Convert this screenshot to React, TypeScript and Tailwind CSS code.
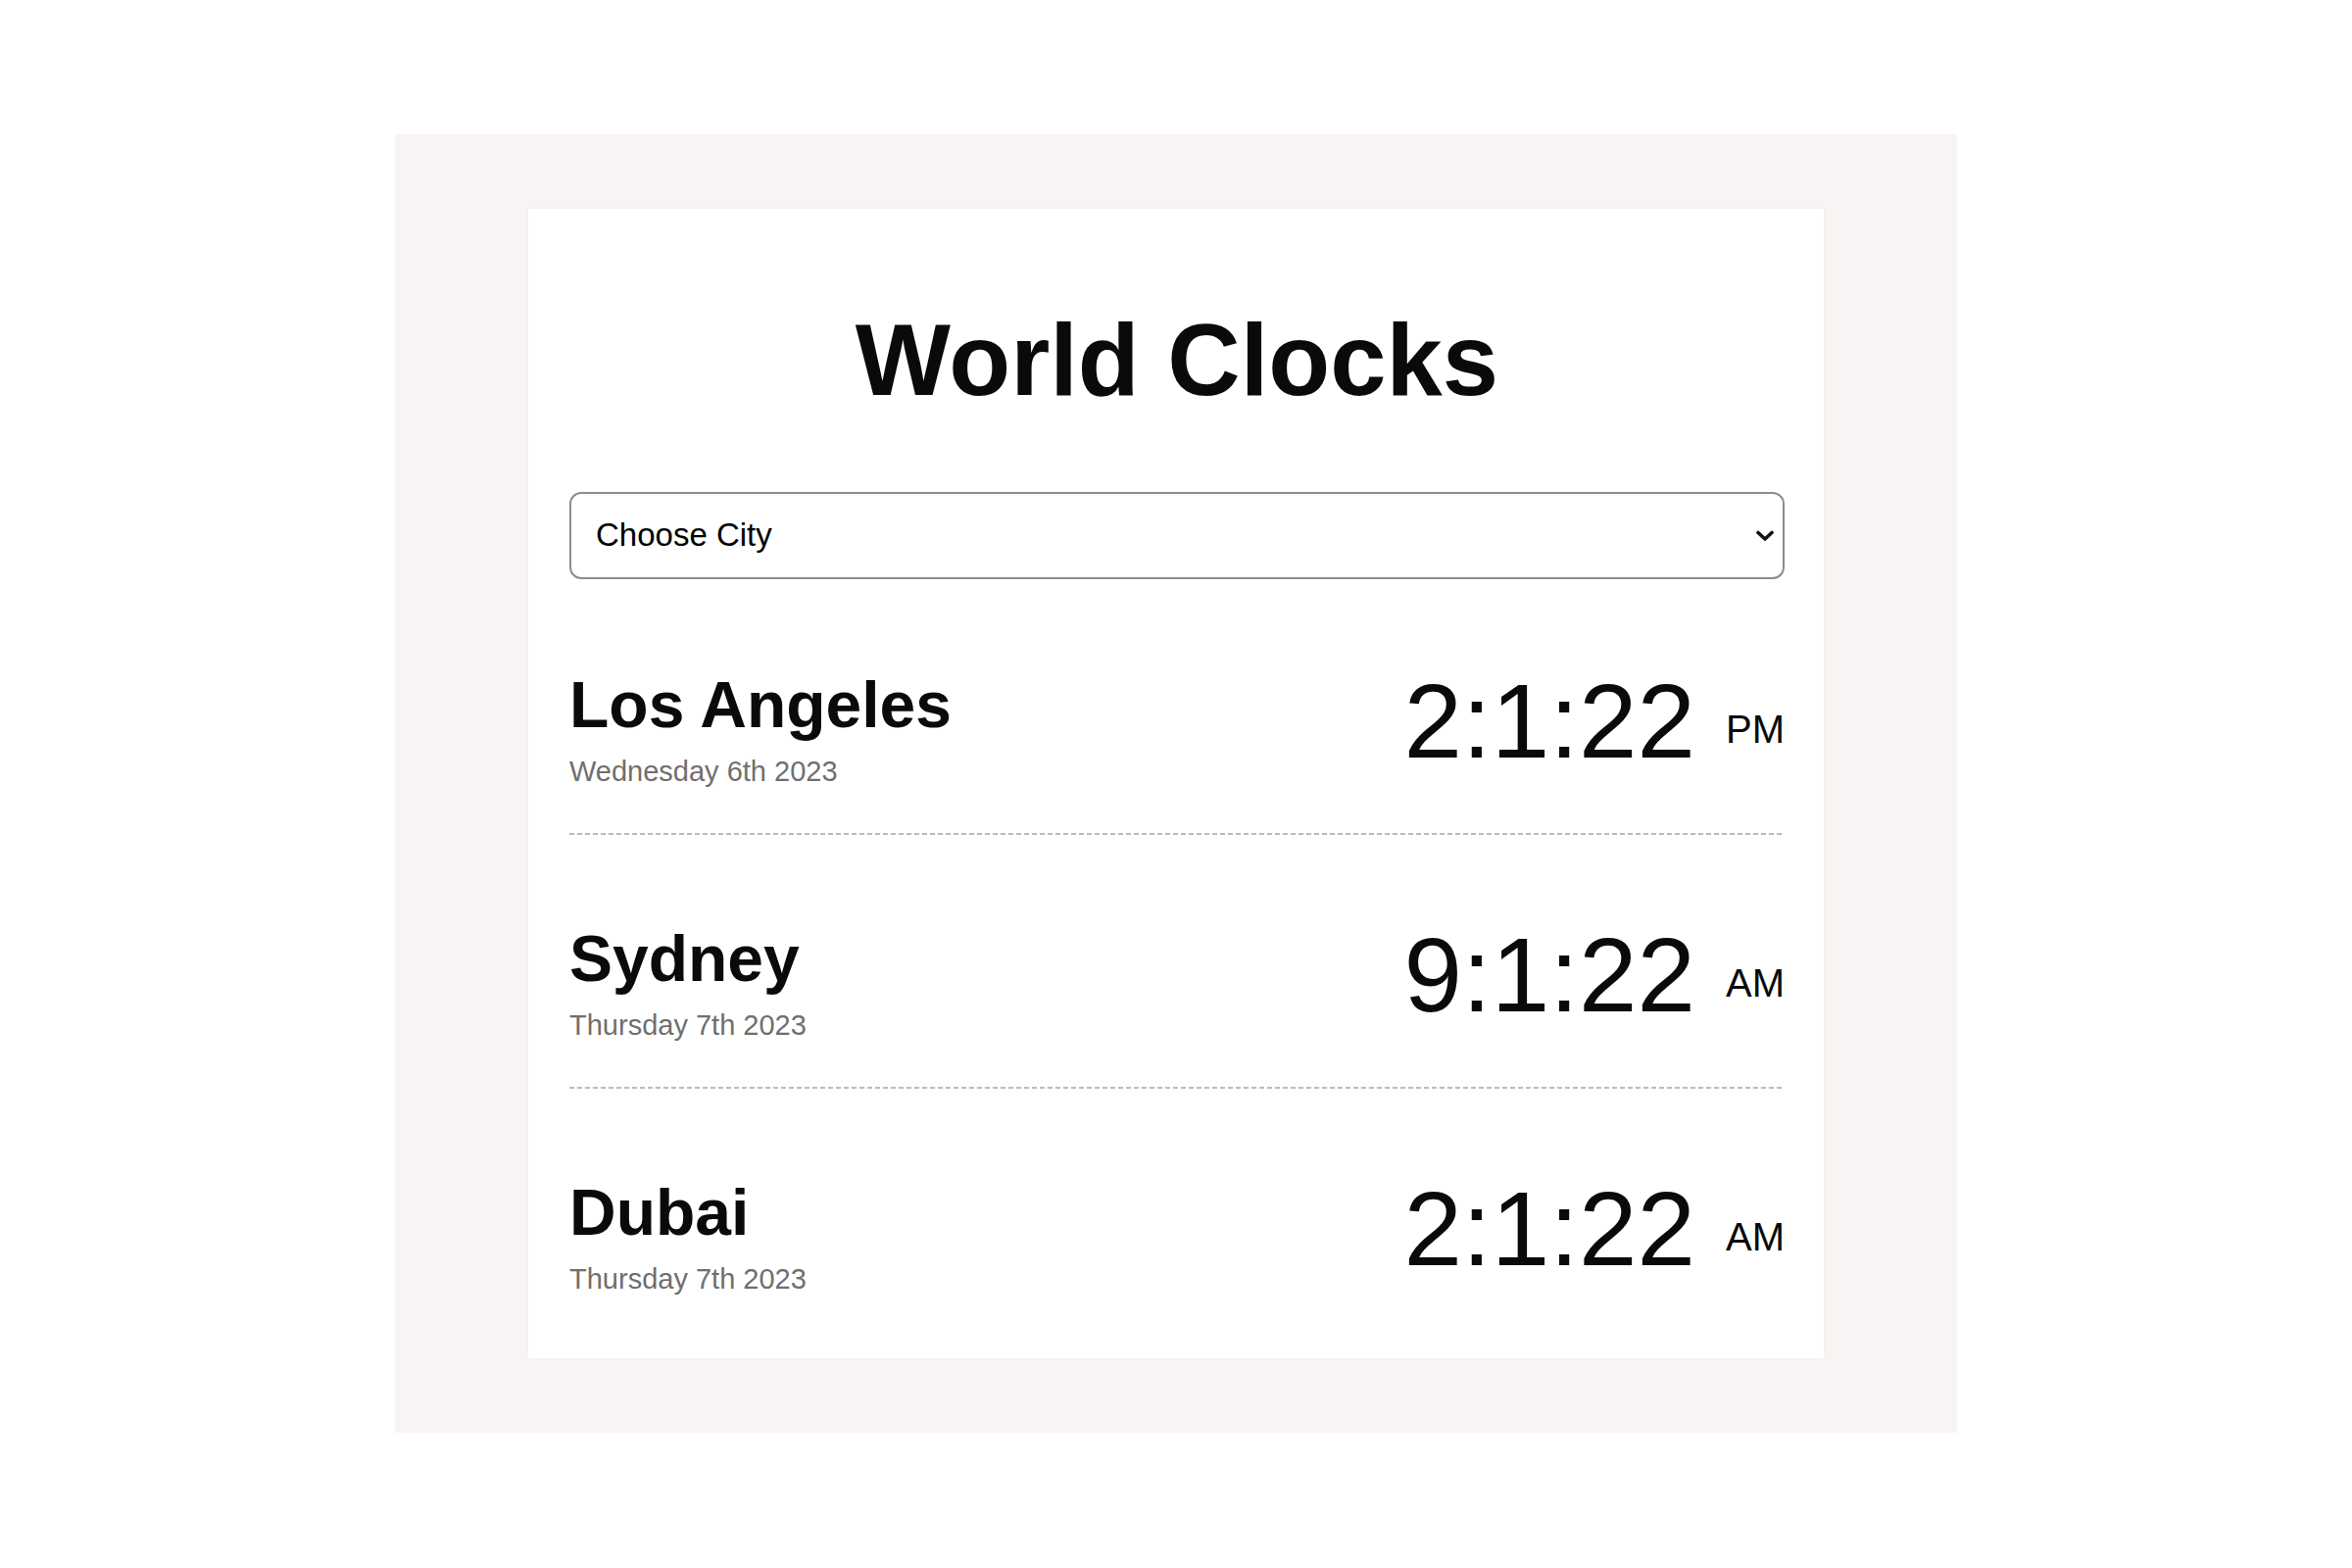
import { useState } from "react";

interface City {
  name: string;
  date: string;
  time: string;
  period: string;
}

const cities: City[] = [
  { name: "Los Angeles", date: "Wednesday 6th 2023", time: "2:1:22", period: "PM" },
  { name: "Sydney", date: "Thursday 7th 2023", time: "9:1:22", period: "AM" },
  { name: "Dubai", date: "Thursday 7th 2023", time: "2:1:22", period: "AM" },
];

function CityRow({ city }: { city: City }) {
  return (
    <div className="flex items-start justify-between pt-[86px] pb-[45px]">
      <div>
        <div className="text-[66px] leading-[80px] font-bold text-[#0a0a0a]">{city.name}</div>
        <div className="mt-[10px] text-[29px] leading-[36px] text-[#6f6f6f]">{city.date}</div>
      </div>
      <div className="mt-[4px] text-[107px] leading-none text-[#0a0a0a] whitespace-nowrap">
        {city.time}
        <span className="ml-[31px] text-[40px] align-[15px]">{city.period}</span>
      </div>
    </div>
  );
}

export default function App() {
  const [selected, setSelected] = useState("");

  return (
    <div className="min-h-screen bg-white pt-[137px] font-['Liberation_Sans',Arial,sans-serif]">
      <div className="mx-auto w-[1594px] bg-[#f8f4f3] px-[136px] py-[76px]">
        <div className="bg-white pl-[42px] pr-[40px] pt-[93px] pb-[18px] shadow-[0_0_2px_rgba(0,0,0,0.06)]">
          <h1 className="mb-[72px] text-center text-[103px] leading-[1.2] font-bold text-[#0a0a0a]">
            World Clocks
          </h1>

          <div className="relative">
            <select
              value={selected}
              onChange={(e) => setSelected(e.target.value)}
              className="block h-[89px] w-full appearance-none rounded-[12px] border-2 border-[#8c8c8c] bg-white pl-[25px] pr-[40px] text-[33px] text-black outline-none"
            >
              <option value="">Choose City</option>
              <option value="tokyo">Tokyo</option>
              <option value="paris">Paris</option>
              <option value="london">London</option>
            </select>
            <svg
              className="pointer-events-none absolute right-[11px] top-[39px]"
              width="18"
              height="12"
              viewBox="0 0 18 12"
              fill="none"
            >
              <polyline points="2,2.5 9,9 16,2.5" stroke="#111" strokeWidth="3.6" strokeLinecap="round" strokeLinejoin="round" />
            </svg>
          </div>

          <div className="mt-[2px]">
            {cities.map((city, i) => (
              <div key={city.name}>
                <CityRow city={city} />
                {i < cities.length - 1 && (
                  <div className="h-[2px] bg-[repeating-linear-gradient(to_right,#bcbcbc_0_5px,transparent_5px_8px)]" />
                )}
              </div>
            ))}
          </div>
        </div>
      </div>
    </div>
  );
}
